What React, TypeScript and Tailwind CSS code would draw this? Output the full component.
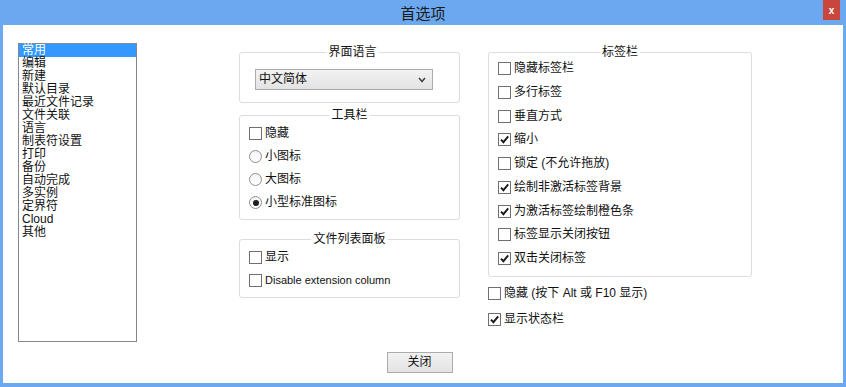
import type { ReactNode } from "react";

const categories = ["常用", "编辑", "新建", "默认目录", "最近文件记录", "文件关联", "语言", "制表符设置", "打印", "备份", "自动完成", "多实例", "定界符", "Cloud", "其他"];

const tabOptions: Array<[string, boolean]> = [
  ["隐藏标签栏", false],
  ["多行标签", false],
  ["垂直方式", false],
  ["缩小", true],
  ["锁定 (不允许拖放)", false],
  ["绘制非激活标签背景", true],
  ["为激活标签绘制橙色条", true],
  ["标签显示关闭按钮", false],
  ["双击关闭标签", true],
];

function CheckBox({ checked }: { checked?: boolean }) {
  return (
    <span className="flex h-[13px] w-[13px] shrink-0 items-center justify-center border border-[#707070] bg-white">
      {checked ? (
        <svg viewBox="0 0 11 11" className="h-[11px] w-[11px]">
          <path d="M2 5.6 L4.4 8.2 L9.2 2.4" stroke="#1a1a1a" strokeWidth="1.9" fill="none" />
        </svg>
      ) : null}
    </span>
  );
}

function Radio({ checked }: { checked?: boolean }) {
  return (
    <span className="flex h-[13px] w-[13px] shrink-0 items-center justify-center rounded-full border border-[#8e8f8f] bg-gradient-to-b from-[#f4f4f4] to-white">
      {checked ? <span className="h-[6px] w-[6px] rounded-full bg-[#1e1e1e]" /> : null}
    </span>
  );
}

function Row({ children, label, tall, small }: { children: ReactNode; label: string; tall?: boolean; small?: boolean }) {
  return (
    <div className={`flex items-center gap-[3px] ${tall ? "h-[23px]" : "h-[13px]"}`}>
      {children}
      <span className={`whitespace-nowrap ${small ? "text-[11px]" : ""}`}>{label}</span>
    </div>
  );
}

function Group({ title, className, children }: { title: string; className: string; children: ReactNode }) {
  return (
    <fieldset className={`rounded-[3px] border border-[#dcdcdc] px-[9px] ${className}`}>
      <legend className="mx-auto bg-white px-[2px] leading-[13px]">{title}</legend>
      {children}
    </fieldset>
  );
}

export default function App() {
  return (
    <div className="flex h-[387px] w-[846px] flex-col bg-[#6ca8ef] text-[12px] leading-[13px] text-[#111] font-['Liberation_Sans','Noto_Sans_CJK_SC',sans-serif]">
      <div className="relative flex h-[25px] shrink-0 items-center justify-center">
        <span className="text-[15px] text-[#1a1a1a] font-['Noto_Sans_CJK_SC',sans-serif]">首选项</span>
        <div className="absolute right-[6px] top-0 flex h-[20px] w-[17px] items-center justify-center bg-[#c9463d] text-[10px] font-bold text-white">x</div>
      </div>

      <div className="mx-[3px] mb-[4px] flex flex-1 flex-col bg-white pl-[15px] pt-[18px]">
        <div className="flex">
          <div className="h-[299px] w-[119px] border border-[#828790]">
            {categories.map((item, index) => (
              <div key={item} className={`h-[13px] pl-[3px] ${index === 0 ? "bg-[#3399ff] text-white" : ""}`}>
                {item}
              </div>
            ))}
          </div>

          <div className="ml-[102px] flex w-[221px] flex-col">
            <Group title="界面语言" className="mt-[3px] pb-[12px] pl-[15px] pt-[10px]">
              <div className="flex h-[21px] w-[178px] items-center justify-between border border-[#acacac] bg-gradient-to-b from-[#f2f2f2] to-[#e3e3e3] pl-[3px] pr-[6px]">
                <span>中文简体</span>
                <svg viewBox="0 0 8 6" className="h-[6px] w-[8px]">
                  <path d="M1 1 L4 4.5 L7 1" stroke="#444" strokeWidth="1.6" fill="none" />
                </svg>
              </div>
            </Group>

            <Group title="工具栏" className="mt-[6px] pb-[5px]">
              <Row label="隐藏" tall>
                <CheckBox />
              </Row>
              <Row label="小图标" tall>
                <Radio />
              </Row>
              <Row label="大图标" tall>
                <Radio />
              </Row>
              <Row label="小型标准图标" tall>
                <Radio checked />
              </Row>
            </Group>

            <Group title="文件列表面板" className="mt-[13px] pb-[5px]">
              <Row label="显示" tall>
                <CheckBox />
              </Row>
              <Row label="Disable extension column" tall small>
                <CheckBox />
              </Row>
            </Group>
          </div>

          <div className="ml-[28px] flex w-[264px] flex-col">
            <Group title="标签栏" className="mt-[3px] pb-[11px] pt-[3px]">
              <div className="flex flex-col gap-[10.75px]">
                {tabOptions.map(([label, checked]) => (
                  <Row key={label} label={label}>
                    <CheckBox checked={checked} />
                  </Row>
                ))}
              </div>
            </Group>
            <div className="mt-[10px] flex flex-col gap-[13px]">
              <Row label="隐藏 (按下 Alt 或 F10 显示)">
                <CheckBox />
              </Row>
              <Row label="显示状态栏">
                <CheckBox checked />
              </Row>
            </div>
          </div>
        </div>

        <div className="mt-[10px] flex justify-center pr-[22px]">
          <button className="h-[21px] w-[66px] border border-[#acacac] bg-gradient-to-b from-[#f2f2f2] to-[#e3e3e3] leading-[13px]">关闭</button>
        </div>
      </div>
    </div>
  );
}
